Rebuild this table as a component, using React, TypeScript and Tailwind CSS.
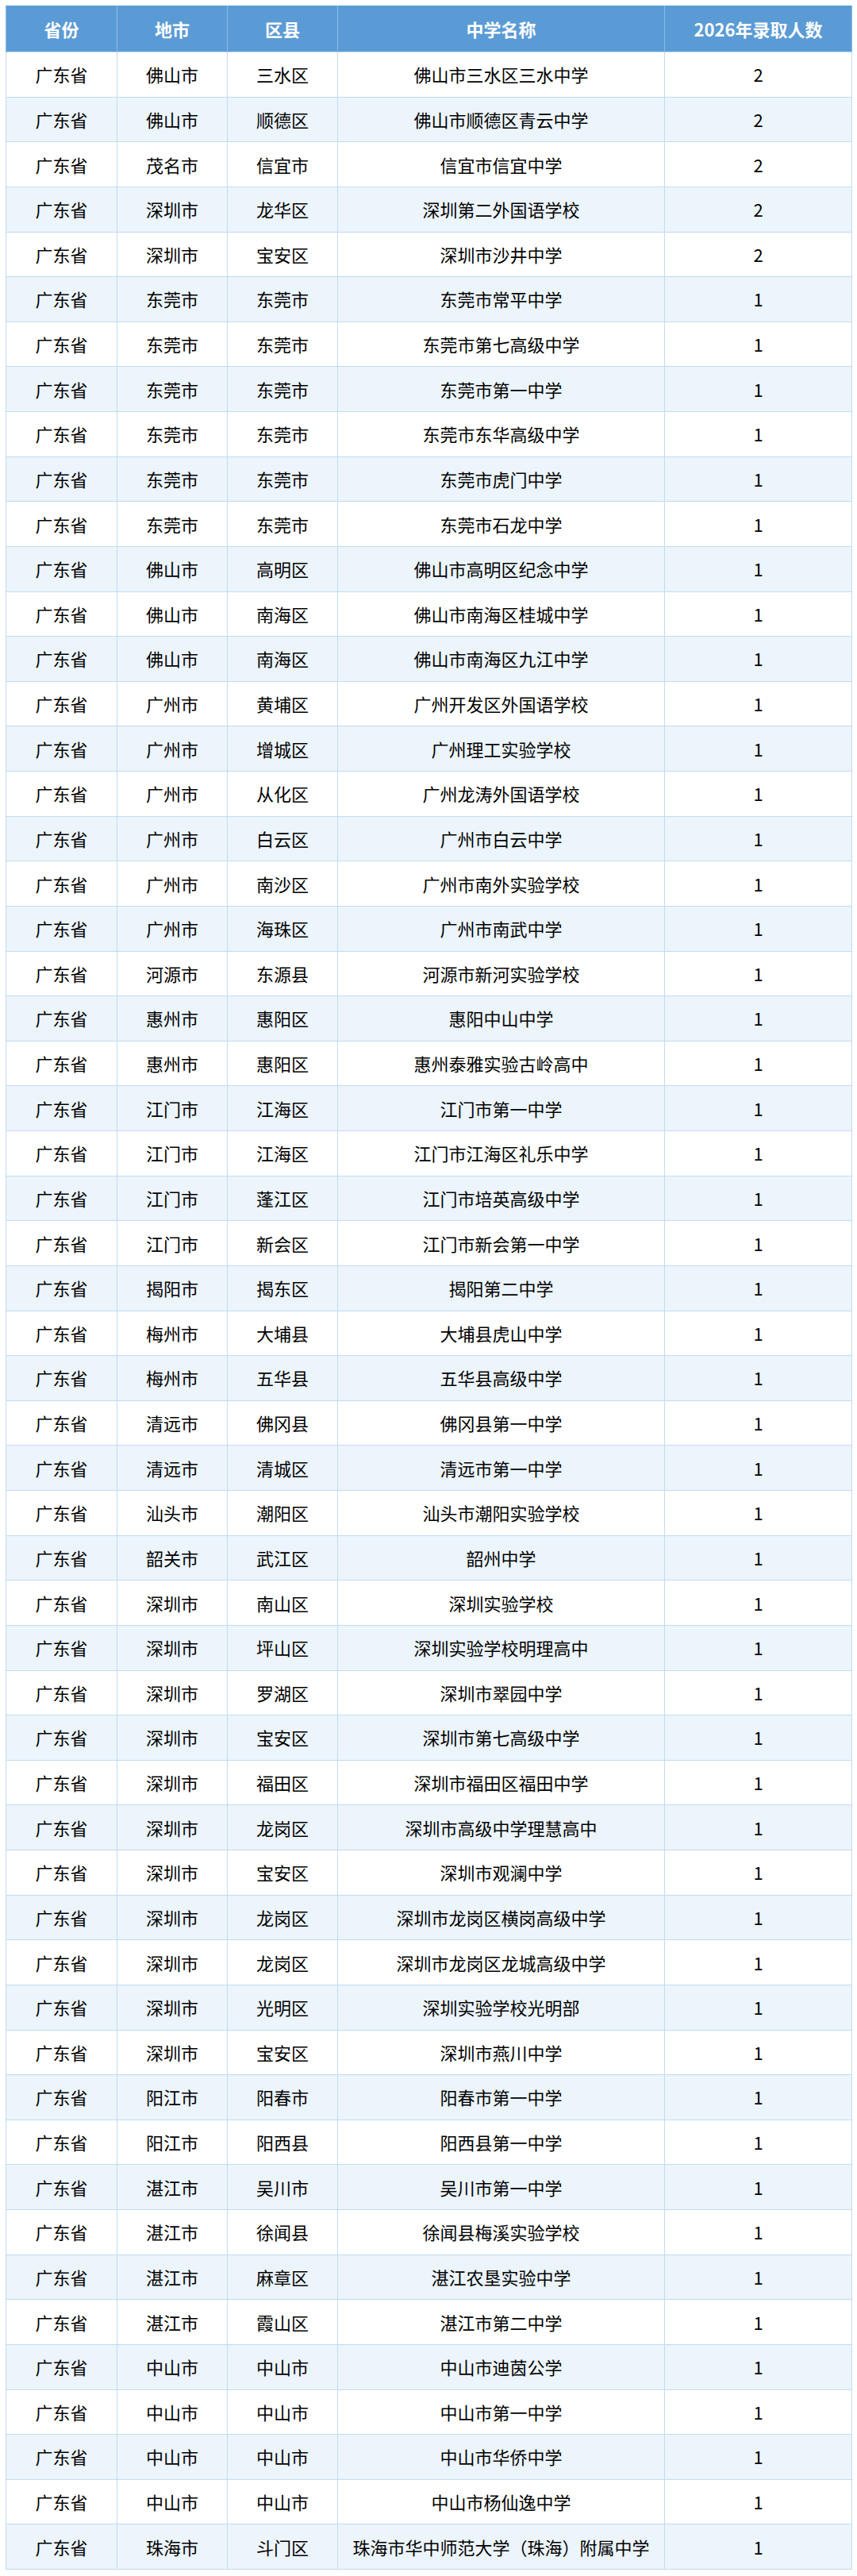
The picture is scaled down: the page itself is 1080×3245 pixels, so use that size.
import React from 'react';

type Row = [string, string, string, number];

// 地市, 区县, 中学名称, 人数 (省份 is always 广东省)
const rows: Row[] = [
  ['佛山市', '三水区', '佛山市三水区三水中学', 2],
  ['佛山市', '顺德区', '佛山市顺德区青云中学', 2],
  ['茂名市', '信宜市', '信宜市信宜中学', 2],
  ['深圳市', '龙华区', '深圳第二外国语学校', 2],
  ['深圳市', '宝安区', '深圳市沙井中学', 2],
  ['东莞市', '东莞市', '东莞市常平中学', 1],
  ['东莞市', '东莞市', '东莞市第七高级中学', 1],
  ['东莞市', '东莞市', '东莞市第一中学', 1],
  ['东莞市', '东莞市', '东莞市东华高级中学', 1],
  ['东莞市', '东莞市', '东莞市虎门中学', 1],
  ['东莞市', '东莞市', '东莞市石龙中学', 1],
  ['佛山市', '高明区', '佛山市高明区纪念中学', 1],
  ['佛山市', '南海区', '佛山市南海区桂城中学', 1],
  ['佛山市', '南海区', '佛山市南海区九江中学', 1],
  ['广州市', '黄埔区', '广州开发区外国语学校', 1],
  ['广州市', '增城区', '广州理工实验学校', 1],
  ['广州市', '从化区', '广州龙涛外国语学校', 1],
  ['广州市', '白云区', '广州市白云中学', 1],
  ['广州市', '南沙区', '广州市南外实验学校', 1],
  ['广州市', '海珠区', '广州市南武中学', 1],
  ['河源市', '东源县', '河源市新河实验学校', 1],
  ['惠州市', '惠阳区', '惠阳中山中学', 1],
  ['惠州市', '惠阳区', '惠州泰雅实验古岭高中', 1],
  ['江门市', '江海区', '江门市第一中学', 1],
  ['江门市', '江海区', '江门市江海区礼乐中学', 1],
  ['江门市', '蓬江区', '江门市培英高级中学', 1],
  ['江门市', '新会区', '江门市新会第一中学', 1],
  ['揭阳市', '揭东区', '揭阳第二中学', 1],
  ['梅州市', '大埔县', '大埔县虎山中学', 1],
  ['梅州市', '五华县', '五华县高级中学', 1],
  ['清远市', '佛冈县', '佛冈县第一中学', 1],
  ['清远市', '清城区', '清远市第一中学', 1],
  ['汕头市', '潮阳区', '汕头市潮阳实验学校', 1],
  ['韶关市', '武江区', '韶州中学', 1],
  ['深圳市', '南山区', '深圳实验学校', 1],
  ['深圳市', '坪山区', '深圳实验学校明理高中', 1],
  ['深圳市', '罗湖区', '深圳市翠园中学', 1],
  ['深圳市', '宝安区', '深圳市第七高级中学', 1],
  ['深圳市', '福田区', '深圳市福田区福田中学', 1],
  ['深圳市', '龙岗区', '深圳市高级中学理慧高中', 1],
  ['深圳市', '宝安区', '深圳市观澜中学', 1],
  ['深圳市', '龙岗区', '深圳市龙岗区横岗高级中学', 1],
  ['深圳市', '龙岗区', '深圳市龙岗区龙城高级中学', 1],
  ['深圳市', '光明区', '深圳实验学校光明部', 1],
  ['深圳市', '宝安区', '深圳市燕川中学', 1],
  ['阳江市', '阳春市', '阳春市第一中学', 1],
  ['阳江市', '阳西县', '阳西县第一中学', 1],
  ['湛江市', '吴川市', '吴川市第一中学', 1],
  ['湛江市', '徐闻县', '徐闻县梅溪实验学校', 1],
  ['湛江市', '麻章区', '湛江农垦实验中学', 1],
  ['湛江市', '霞山区', '湛江市第二中学', 1],
  ['中山市', '中山市', '中山市迪茵公学', 1],
  ['中山市', '中山市', '中山市第一中学', 1],
  ['中山市', '中山市', '中山市华侨中学', 1],
  ['中山市', '中山市', '中山市杨仙逸中学', 1],
  ['珠海市', '斗门区', '珠海市华中师范大学（珠海）附属中学', 1],
];

const headers = ['省份', '地市', '区县', '中学名称', '2026年录取人数'];

export default function App() {
  return (
    <div className="min-h-[3245px] bg-white pt-[7px] pl-[7px] font-['Noto_Sans_CJK_SC','Noto_Sans',sans-serif]">
      <table className="w-[1066px] table-fixed border-collapse border border-[#5b9bd5] text-[22px] text-black">
        <colgroup>
          <col className="w-[140px]" />
          <col className="w-[139px]" />
          <col className="w-[139px]" />
          <col className="w-[412px]" />
          <col className="w-[236px]" />
        </colgroup>
        <thead>
          <tr className="h-[58px] bg-[#5b9bd5]">
            {headers.map((h) => (
              <th
                key={h}
                className="border-x border-[#8dbbe6] p-0 text-center text-[22px] font-bold text-white"
              >
                {h}
              </th>
            ))}
          </tr>
        </thead>
        <tbody>
          {rows.map((r, i) => (
            <tr key={i} className={i % 2 === 1 ? 'h-[56.64px] bg-[#ecf4fc]' : 'h-[56.64px] bg-white'}>
              <td className="border border-[#c3dbf1] p-0 text-center">广东省</td>
              <td className="border border-[#c3dbf1] p-0 text-center">{r[0]}</td>
              <td className="border border-[#c3dbf1] p-0 text-center">{r[1]}</td>
              <td className="border border-[#c3dbf1] p-0 text-center whitespace-nowrap">{r[2]}</td>
              <td className="border border-[#c3dbf1] p-0 text-center">{r[3]}</td>
            </tr>
          ))}
        </tbody>
      </table>
    </div>
  );
}
